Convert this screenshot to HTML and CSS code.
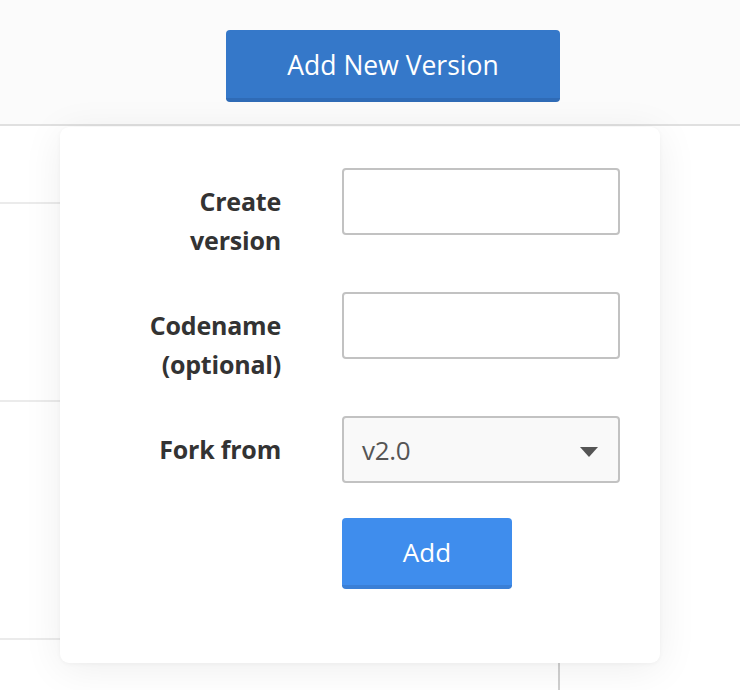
FILE: index.html
```html
<!DOCTYPE html>
<html>
<head>
<meta charset="utf-8">
<link rel="stylesheet" href="styles.css">
</head>
<body>
<div class="page">
  <header class="topbar">
    <button class="btn-primary">Add New Version</button>
  </header>
  <div class="table">
    <div class="row r1"><div class="cell main"></div><div class="cell side"></div></div>
    <div class="row r2"><div class="cell main"></div><div class="cell side"></div></div>
    <div class="row r3"><div class="cell main"></div><div class="cell side"></div></div>
    <div class="row r4"><div class="cell main"></div><div class="cell side"></div></div>
  </div>
  <div class="popover">
    <form class="form">
      <label class="label" for="ver">Create<br>version</label>
      <input class="input" id="ver" type="text">
      <label class="label" for="code">Codename<br>(optional)</label>
      <input class="input" id="code" type="text">
      <label class="label" for="fork">Fork from</label>
      <div class="select" id="fork">
        <span class="select-value">v2.0</span>
        <svg class="caret" width="18" height="10" viewBox="0 0 18 10"><path d="M0 0 L18 0 L9 10 Z" fill="#555"/></svg>
      </div>
      <div class="spacer"></div>
      <button type="button" class="btn-add">Add</button>
    </form>
  </div>
</div>
</body>
</html>
```
FILE: styles.css
```css
* { box-sizing: border-box; }
html, body { margin: 0; padding: 0; }
body {
  width: 740px;
  height: 690px;
  overflow: hidden;
  background: #ffffff;
  font-family: "Open Sans", "Liberation Sans", sans-serif;
}
.page { position: relative; width: 740px; height: 690px; }
.topbar {
  height: 126px;
  background: #fbfbfb;
  border-bottom: 2px solid #e0e0e0;
  display: flex;
  padding-top: 30px;
  padding-left: 226px;
}
.btn-primary {
  width: 334px;
  height: 72px;
  background: #3578c9;
  border: none;
  border-bottom: 4px solid #2f6bb6;
  border-radius: 4px;
  color: #fff;
  font-family: inherit;
  font-size: 26.5px;
  padding: 2px 0 0;
}
.table { display: flex; flex-direction: column; }
.row { display: flex; }
.r1 { height: 78px; }
.r2 { height: 198px; }
.r3 { height: 238px; }
.r4 { height: 60px; }
.cell.main {
  width: 560px;
  border-bottom: 2px solid #ebebeb;
}
.r4 .cell.main {
  border-bottom: none;
  border-right: 2px solid #d0d0d0;
}
.cell.side { flex: 1; }
.popover {
  position: absolute;
  left: 60px;
  top: 127px;
  width: 600px;
  height: 536px;
  background: #fff;
  border-radius: 9px;
  box-shadow: 0 6px 40px rgba(0,0,0,0.07), 0 1px 4px rgba(0,0,0,0.04);
  padding: 41px 40px 0 0;
}
.form {
  display: grid;
  grid-template-columns: 221px 278px;
  grid-auto-rows: 67px;
  column-gap: 61px;
  row-gap: 57px;
  align-items: start;
}
.label {
  text-align: right;
  font-weight: 700;
  font-size: 25px;
  line-height: 39px;
  color: #333;
  padding-top: 14px;
  letter-spacing: -0.2px;
  white-space: nowrap;
}
.input, .select {
  width: 278px;
  height: 67px;
  border: 2px solid #c2c2c2;
  border-radius: 4px;
  background: #fff;
  margin: 0;
}
.select {
  background: #f9f9f9;
  display: flex;
  align-items: center;
  justify-content: space-between;
  padding: 0 20px 0 18px;
}
.select-value {
  font-size: 26px;
  color: #555;
  letter-spacing: -0.3px;
}
.caret { margin-top: 4px; }
.btn-add {
  margin-top: -22px;
  width: 170px;
  height: 71px;
  background: #3f8ded;
  border: none;
  border-bottom: 4px solid #3a7fd6;
  border-radius: 4px;
  color: #fff;
  font-family: inherit;
  font-size: 26px;
  padding: 0;
}
```
